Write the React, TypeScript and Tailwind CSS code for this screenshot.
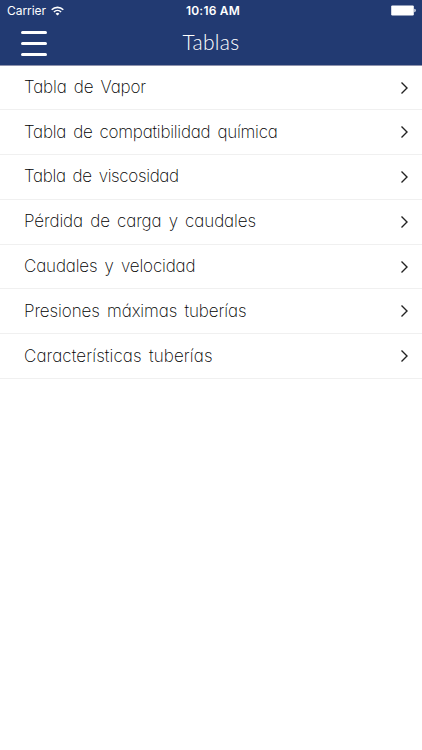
const tables = [
  { label: "Tabla de Vapor", tracking: "tracking-[-0.13px]" },
  { label: "Tabla de compatibilidad química", tracking: "tracking-[-0.24px]" },
  { label: "Tabla de viscosidad", tracking: "tracking-[-0.34px]" },
  { label: "Pérdida de carga y caudales", tracking: "tracking-[-0.1px]" },
  { label: "Caudales y velocidad", tracking: "tracking-[-0.15px]" },
  { label: "Presiones máximas tuberías", tracking: "tracking-[-0.08px]" },
  { label: "Características tuberías", tracking: "tracking-[0.1px]" },
];

function WifiIcon() {
  return (
    <svg width="13" height="10" viewBox="0 0 13 10" fill="none" stroke="white" strokeWidth="1.6">
      <path d="M0.7 3.7a8.3 8.3 0 0 1 11.6 0" />
      <path d="M2.9 6a5.2 5.2 0 0 1 7.2 0" />
      <path d="M6.5 9.6 4.6 7.7a2.8 2.8 0 0 1 3.8 0Z" fill="white" stroke="none" />
    </svg>
  );
}

function BatteryIcon() {
  return (
    <svg width="25" height="11" viewBox="0 0 25 11">
      <rect x="0.2" y="0.4" width="22.6" height="10" rx="1.2" fill="white" />
      <path d="M23.4 3.8c.9.2 1.3.8 1.3 1.7s-.4 1.500-1.300 1.700Z" fill="white" />
    </svg>
  );
}

function StatusBar() {
  return (
    <div className="grid h-[22px] grid-cols-3 items-center pl-[7px] pr-[6px] font-['Inter',sans-serif] text-[12px] leading-none text-white">
      <div className="flex items-center gap-[5px]">
        <span className="tracking-[-0.05px]">Carrier</span>
        <WifiIcon />
      </div>
      <span className="pl-[3px] text-center font-semibold tracking-[0.2px]">10:16 AM</span>
      <div className="flex justify-end pb-px">
        <BatteryIcon />
      </div>
    </div>
  );
}

function Header() {
  return (
    <header className="h-[66px] border-b border-[#8f93ad] bg-[#223a72]">
      <StatusBar />
      <div className="grid h-[43px] grid-cols-[56px_1fr_56px] items-center">
        <button aria-label="Menu" className="flex flex-col gap-[8px] pb-px pl-[21px]">
          <span className="h-[3px] w-[26px] rounded-full bg-white" />
          <span className="h-[3px] w-[26px] rounded-full bg-white" />
          <span className="h-[3px] w-[26px] rounded-full bg-white" />
        </button>
        <h1 className="pb-[4px] text-center font-['Lato',sans-serif] text-[21px] leading-none font-light tracking-[0.3px] text-white">
          Tablas
        </h1>
      </div>
    </header>
  );
}

function TableRow({ label, tracking }: { label: string; tracking: string }) {
  return (
    <li className="flex h-[44.8px] items-center justify-between border-b border-[#f0f0f0] pr-[13px] pl-6 first:h-[44.3px]">
      <span
        className={`font-['Inter',sans-serif] text-[17px] leading-none font-extralight whitespace-nowrap text-black [font-feature-settings:'cv11'] [word-spacing:2.5px] ${tracking}`}
      >
        {label}
      </span>
      <svg width="9" height="14" viewBox="0 0 9 14" fill="none" stroke="#222" strokeWidth="1.4">
        <path d="M1.5 1.5 7 7l-5.500 5.500" />
      </svg>
    </li>
  );
}

export default function App() {
  return (
    <div className="min-h-screen bg-white">
      <Header />
      <ul>
        {tables.map(({ label, tracking }) => (
          <TableRow key={label} label={label} tracking={tracking} />
        ))}
      </ul>
    </div>
  );
}
